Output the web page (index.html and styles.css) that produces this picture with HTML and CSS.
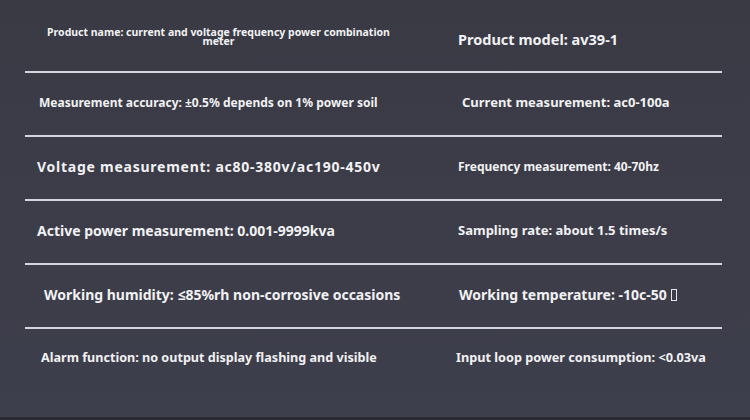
FILE: index.html
```html
<!DOCTYPE html>
<html lang="en">
<head>
<meta charset="utf-8">
<title>Product parameters</title>
<link rel="stylesheet" href="styles.css">
</head>
<body>
<main class="sheet">
  <div class="row row-first">
    <div class="cell left name">Product name: current and voltage frequency power combination meter</div>
    <div class="cell right s15 down">Product model: av39-1</div>
  </div>
  <div class="row">
    <div class="cell left s12 in2">Measurement accuracy: ±0.5% depends on 1% power soil</div>
    <div class="cell right s13 in6">Current measurement: ac0-100a</div>
  </div>
  <div class="row">
    <div class="cell left s14 wide">Voltage measurement: ac80-380v/ac190-450v</div>
    <div class="cell right s12">Frequency measurement: 40-70hz</div>
  </div>
  <div class="row">
    <div class="cell left s14">Active power measurement: 0.001-9999kva</div>
    <div class="cell right s13">Sampling rate: about 1.5 times/s</div>
  </div>
  <div class="row">
    <div class="cell left s14 in7">Working humidity: ≤85%rh non-corrosive occasions</div>
    <div class="cell right s14 in3">Working temperature: -10c-50 <span class="tofu"></span></div>
  </div>
  <div class="row row-last">
    <div class="cell left s126 in4">Alarm function: no output display flashing and visible</div>
    <div class="cell right s127 in0">Input loop power consumption: &lt;0.03va</div>
  </div>
</main>
</body>
</html>
```
FILE: styles.css
```css
html, body {
  margin: 0;
  padding: 0;
}
body {
  width: 750px;
  height: 420px;
  overflow: hidden;
  background: linear-gradient(180deg, #393a44 0%, #3c3d49 60%, #3e3f4c 100%);
  border-bottom: 3px solid #2a2a32;
  box-sizing: border-box;
  font-family: "Noto Sans", "Open Sans", "Liberation Sans", sans-serif;
  font-weight: 700;
  color: #f1f1f3;
}
.sheet {
  margin-left: 25px;
  width: 697px;
}
.row {
  display: grid;
  grid-template-columns: 431px 1fr;
  align-items: center;
  height: 64px;
  box-sizing: border-box;
  border-bottom: 2px solid #d4d5dd;
}
.row-first {
  height: 73px;
}
.row-last {
  border-bottom: none;
  height: 60px;
}
.cell {
  white-space: nowrap;
  padding-bottom: 4px;
}
.left {
  padding-left: 12px;
}
.right {
  padding-left: 2px;
}
.name {
  white-space: normal;
  width: 355px;
  padding-left: 16px;
  padding-top: 2px;
  padding-bottom: 0;
  text-align: center;
  font-size: 10.5px;
  line-height: 9px;
}
.down {
  padding-top: 6px;
  padding-bottom: 0;
}
.s12 { font-size: 12px; }
.s126 { font-size: 12.6px; }
.s127 { font-size: 12.7px; }
.s13 { font-size: 13px; }
.s14 { font-size: 14px; }
.s15 { font-size: 14.5px; }
.wide { letter-spacing: 0.75px; }
.in0 { padding-left: 0; }
.in2 { padding-left: 14px; }
.in3 { padding-left: 3px; }
.in4 { padding-left: 16px; }
.in6 { padding-left: 6px; }
.in7 { padding-left: 19px; }
.tofu {
  display: inline-block;
  width: 6px;
  height: 12px;
  margin-left: 1px;
  border: 1px solid #e8e8ec;
  box-sizing: border-box;
  vertical-align: -1px;
}
```
